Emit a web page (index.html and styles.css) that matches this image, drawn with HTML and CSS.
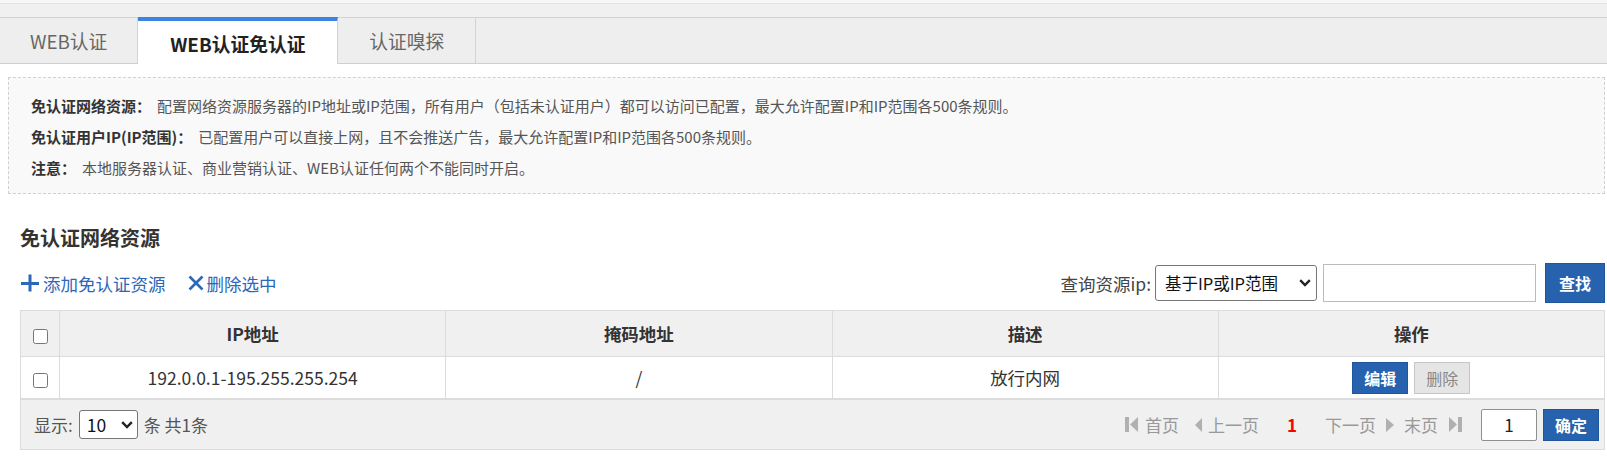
FILE: index.html
```html
<!DOCTYPE html>
<html lang="zh-CN">
<head>
<meta charset="utf-8">
<title>WEB认证免认证</title>
<link rel="stylesheet" href="styles.css">
</head>
<body>
<div class="topbar"><div class="topbar-inner"></div></div>
<div class="tabs">
  <div class="tab">WEB认证</div>
  <div class="tab active">WEB认证免认证</div>
  <div class="tab">认证嗅探</div>
</div>
<div class="info">
  <p><b>免认证网络资源：</b>配置网络资源服务器的IP地址或IP范围，所有用户（包括未认证用户）都可以访问已配置，最大允许配置IP和IP范围各500条规则。</p>
  <p><b>免认证用户IP(IP范围)：</b>已配置用户可以直接上网，且不会推送广告，最大允许配置IP和IP范围各500条规则。</p>
  <p><b>注意：</b>本地服务器认证、商业营销认证、WEB认证任何两个不能同时开启。</p>
</div>
<div class="section">
  <h2 class="title">免认证网络资源</h2>
  <div class="toolbar">
    <div class="actions">
      <a class="action"><svg class="ico-plus" width="20" height="18" viewBox="0 0 20 18"><path d="M1 9.5H19M10 0.5V17.5" stroke="currentColor" stroke-width="3" fill="none"/></svg>添加免认证资源</a>
      <a class="action"><svg class="ico-x" width="16" height="16" viewBox="0 0 16 16"><path d="M1.5 1.5L14.5 14.5M14.5 1.5L1.5 14.5" stroke="currentColor" stroke-width="2.6" fill="none"/></svg>删除选中</a>
    </div>
    <form class="search">
      <label class="search-label">查询资源ip:</label>
      <span class="select-wrap search-select">
        <select class="select search-type"><option>基于IP或IP范围</option></select>
        <svg class="chevron" width="12" height="8" viewBox="0 0 12 8"><path d="M1.2 1.2L6 6L10.8 1.2" stroke="#222" stroke-width="2.4" fill="none"/></svg>
      </span>
      <input class="search-input" type="text">
      <button type="button" class="btn btn-primary btn-search">查找</button>
    </form>
  </div>
  <table class="grid">
    <colgroup><col class="col-chk"><col><col><col><col></colgroup>
    <thead>
      <tr><th><input type="checkbox"></th><th>IP地址</th><th>掩码地址</th><th>描述</th><th>操作</th></tr>
    </thead>
    <tbody>
      <tr>
        <td><input type="checkbox"></td>
        <td>192.0.0.1-195.255.255.254</td>
        <td>/</td>
        <td>放行内网</td>
        <td><div class="ops"><button type="button" class="btn btn-primary btn-sm">编辑</button><button type="button" class="btn btn-default btn-sm">删除</button></div></td>
      </tr>
    </tbody>
  </table>
  <div class="pager">
    <div class="pager-size">
      <span>显示:</span>
      <span class="select-wrap size-wrap">
        <select class="select size-select"><option>10</option></select>
        <svg class="chevron" width="12" height="8" viewBox="0 0 12 8"><path d="M1.2 1.2L6 6L10.8 1.2" stroke="#222" stroke-width="2.4" fill="none"/></svg>
      </span>
      <span>条 共1条</span>
    </div>
    <div class="pager-nav">
      <span class="pg pg-first"><svg width="13" height="15" viewBox="0 0 13 15"><rect width="4" height="15"/><path d="M13 0V15L5 7.5Z"/></svg>首页</span>
      <span class="pg pg-prev"><svg width="7" height="14" viewBox="0 0 7 14"><path d="M7 0V14L0 7Z"/></svg>上一页</span>
      <span class="pg pg-current">1</span>
      <span class="pg pg-next">下一页<svg width="8" height="14" viewBox="0 0 8 14"><path d="M0 0V14L8 7Z"/></svg></span>
      <span class="pg pg-last">末页<svg width="13" height="15" viewBox="0 0 13 15"><path d="M0 0V15L8 7.5Z"/><rect x="9" width="4" height="15"/></svg></span>
      <input class="page-input" type="text" value="1">
      <button type="button" class="btn btn-primary btn-go">确定</button>
    </div>
  </div>
</div>
</body>
</html>
```
FILE: styles.css
```css
body {
  margin: 0;
  font-family: "Noto Sans CJK SC", "Noto Sans", sans-serif;
  color: #333;
  background: #fff;
}

.topbar {
  padding-top: 3px;
  background: #f7f7f7;
}
.topbar-inner {
  height: 13px;
  border-top: 1px solid #e3e3e3;
  background: #f0f0f0;
}

.tabs {
  display: flex;
  height: 45px;
  background: #eeeeee;
  border-top: 1px solid #d2d2d2;
  border-bottom: 1px solid #cfcfcf;
}
.tab {
  box-sizing: border-box;
  min-width: 138px;
  padding: 0 30px;
  border-right: 1px solid #d2d2d2;
  font-size: 18.75px;
  line-height: 45px;
  color: #666;
  text-align: center;
}
.tab.active {
  min-width: 200px;
  height: 47px;
  margin: -1px 0 -1px;
  border-top: 4px solid #3d84e0;
  background: #fff;
  color: #222;
  font-weight: bold;
  line-height: 43px;
  padding-top: 1px;
}

.info {
  margin: 13px 2px 0 8px;
  padding: 12px 22px 10px;
  border: 1px dashed #d0d0d0;
  background: #f9f9f9;
  font-size: 15px;
  line-height: 31px;
  color: #555;
}
.info p {
  margin: 0;
}
.info b {
  color: #333;
  margin-right: 6px;
}

.section {
  padding: 0 2px 0 20px;
}
.title {
  margin: 30px 0 0;
  font-size: 20px;
  line-height: 28px;
  font-weight: bold;
  color: #333;
}

.toolbar {
  display: flex;
  justify-content: space-between;
  align-items: center;
  height: 40px;
  margin-top: 11px;
}
.actions {
  display: flex;
  align-items: center;
  gap: 22px;
  font-size: 17.5px;
  color: #2d67b8;
}
.action {
  display: flex;
  align-items: center;
  gap: 3px;
  color: inherit;
  text-decoration: none;
  cursor: pointer;
}

.search {
  display: flex;
  align-items: center;
  margin: 0;
  font-size: 17.5px;
  color: #444;
}
.search-label {
  margin-right: 4px;
}

.select-wrap {
  position: relative;
  display: inline-flex;
}
.select {
  box-sizing: border-box;
  -webkit-appearance: none;
  appearance: none;
  margin: 0;
  border: 1px solid #767676;
  border-radius: 3px;
  background: #fff;
  font-family: inherit;
  color: #111;
}
.chevron {
  position: absolute;
  top: 50%;
  right: 6px;
  margin-top: -4px;
  pointer-events: none;
}
.search-select {
  margin-right: 6px;
}
.search-type {
  width: 162px;
  height: 36px;
  padding: 0 22px 0 9px;
  font-size: 16.5px;
}
.search-input {
  box-sizing: border-box;
  width: 213px;
  height: 38px;
  margin: 0 9px 0 0;
  border: 1px solid #bbb;
  font-size: 15px;
}

.btn {
  box-sizing: border-box;
  padding: 0;
  border: 1px solid;
  font-family: inherit;
  font-size: 16px;
  cursor: pointer;
}
.btn-primary {
  background: #2662ad;
  border-color: #1f5699;
  color: #fff;
  font-weight: bold;
}
.btn-default {
  background: #e5e5e5;
  border-color: #c6c6c6;
  color: #888;
}
.btn-search {
  width: 60px;
  height: 40px;
}
.btn-sm {
  width: 56px;
  height: 32px;
}

.grid {
  width: 100%;
  margin-top: 7px;
  border-collapse: collapse;
  table-layout: fixed;
  font-size: 17.5px;
  border: 1px solid #dcdcdc;
}
.col-chk {
  width: 39px;
}
.grid th,
.grid td {
  padding: 0;
  border: 1px solid #dcdcdc;
  text-align: center;
}
.grid th {
  height: 45px;
  background: #f0f0f0;
  font-weight: bold;
  color: #333;
}
.grid td {
  height: 41px;
  color: #333;
}
.grid input[type="checkbox"] {
  width: 15px;
  height: 15px;
  margin: 0;
  vertical-align: middle;
}
.ops {
  display: flex;
  justify-content: center;
  gap: 6px;
}

.pager {
  display: flex;
  justify-content: space-between;
  align-items: center;
  height: 49px;
  padding: 0 5px 0 13px;
  border: 1px solid #dcdcdc;
  background: #f0f0f0;
  font-size: 17px;
  color: #555;
}
.pager-size {
  display: flex;
  align-items: center;
  gap: 6px;
}
.size-wrap .chevron {
  right: 5px;
}
.size-select {
  width: 59px;
  height: 29px;
  padding: 0 20px 0 7px;
  font-size: 17.5px;
}
.pager-nav {
  display: flex;
  align-items: center;
  color: #999;
}
.pg {
  display: flex;
  align-items: center;
  gap: 7px;
}
.pg svg {
  fill: #b0b0b0;
}
.pg-prev {
  margin-left: 16px;
  gap: 6px;
}
.pg-current {
  margin: 0 28px;
  color: #f00;
  font-weight: bold;
}
.pg-next {
  gap: 10px;
}
.pg-last {
  margin-left: 10px;
  gap: 11px;
}
.page-input {
  box-sizing: border-box;
  width: 56px;
  height: 32px;
  margin: 0 6px 0 19px;
  border: 1px solid #8f8f8f;
  border-radius: 2px;
  text-align: center;
  font-family: inherit;
  font-size: 17px;
  color: #222;
}
.btn-go {
  width: 56px;
  height: 32px;
}
```
